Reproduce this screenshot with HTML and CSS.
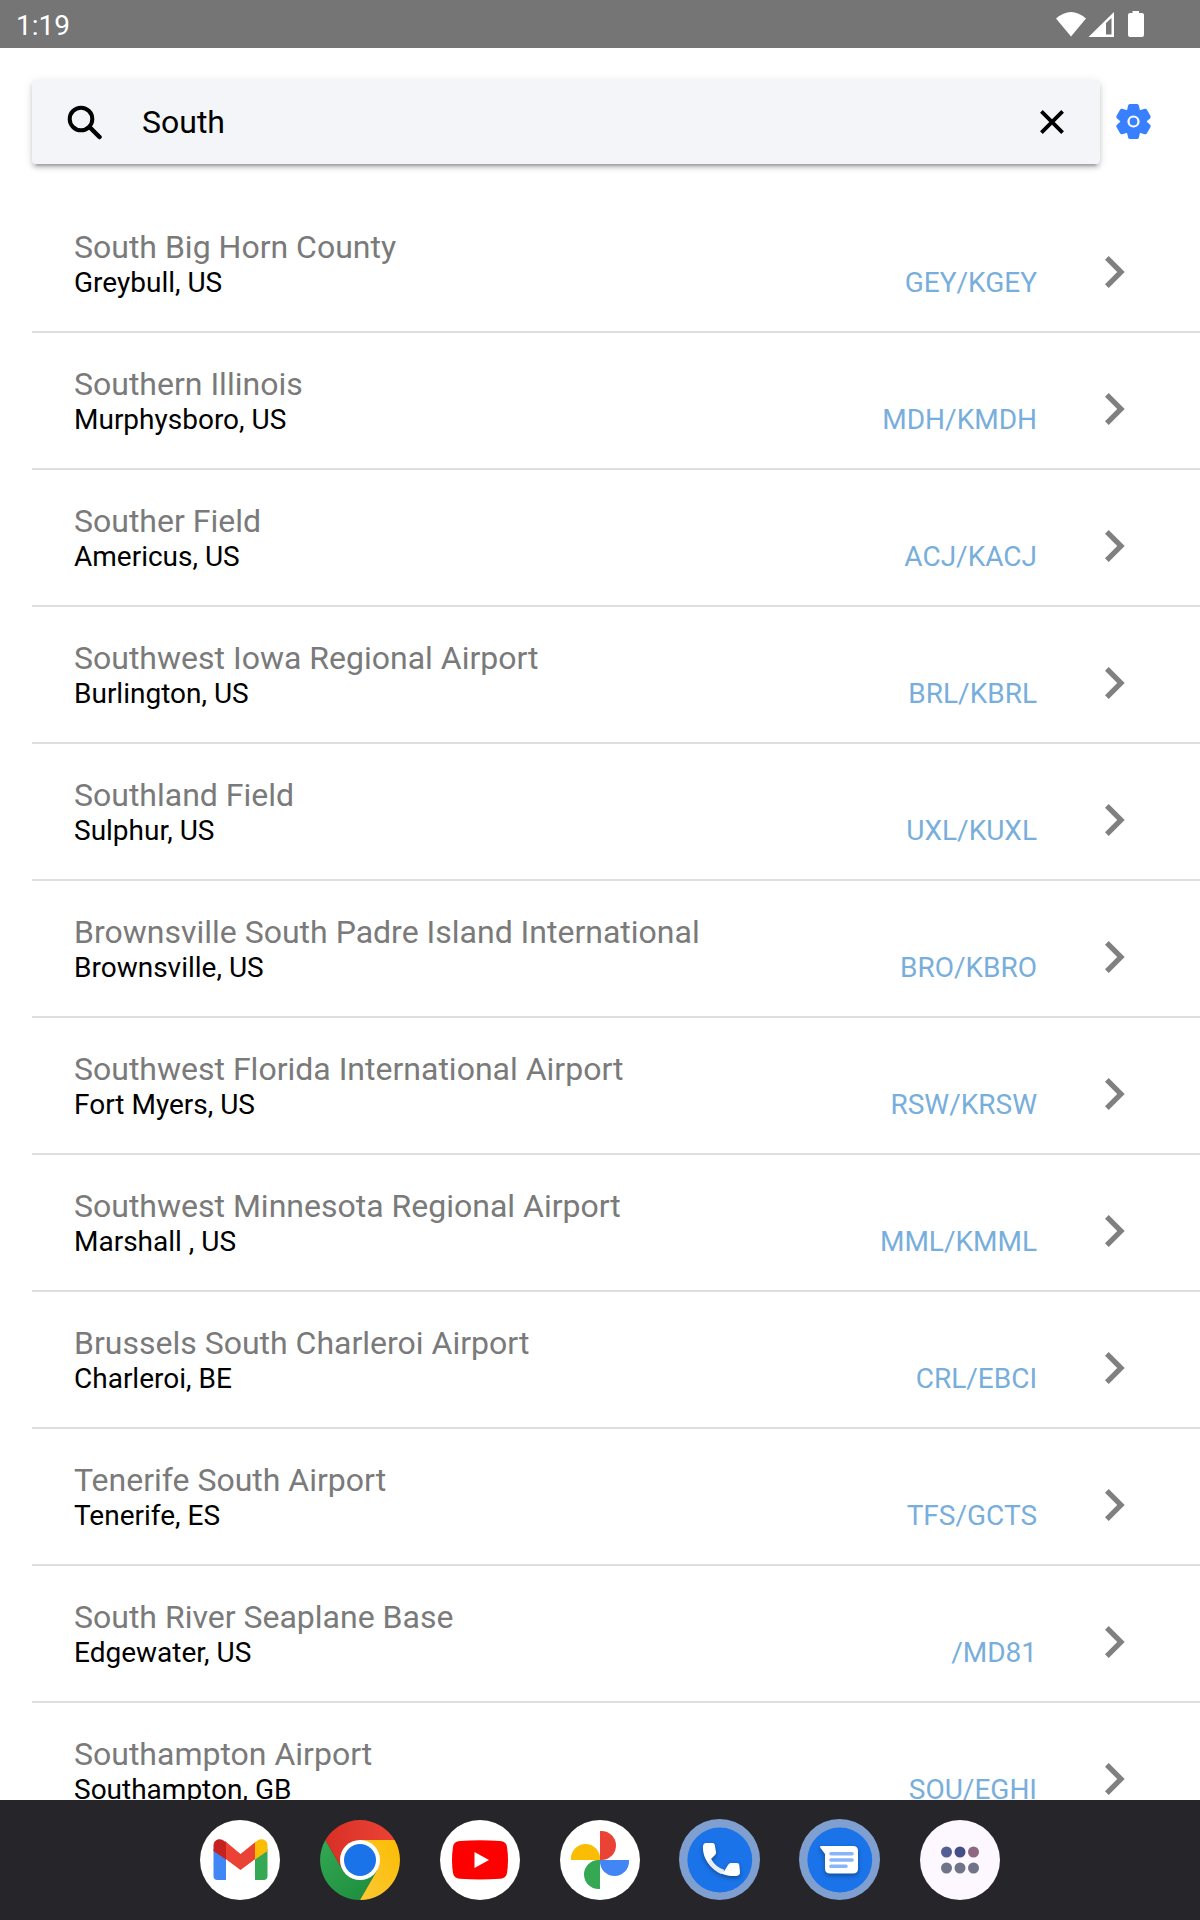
FILE: index.html
```
<!DOCTYPE html>
<html lang="en">
<head>
  <meta charset="UTF-8" />
  <meta name="viewport" content="width=device-width, initial-scale=1.0"/>
  <title>Airport Search</title>
  <link rel="stylesheet" href="styles.css">
</head>
<body>

  <!-- Device status bar -->
  <div class="status-bar">
    <span>1:19</span>
    <svg class="status-icons" width="90" height="28" viewBox="0 0 90 28" fill="#fff" aria-hidden="true">
      <path d="M1 7.500Q16 -5.500 31 7.500L16 25.500Z"/>
      <path fill-rule="evenodd" d="M33.500 26L59 1V26ZM51 12V23.500H56.500V7Z"/>
      <path d="M77.500 0h6.500v2h3q2 0 2 2v20q0 2-2 2h-12q-2 0-2-2v-20q0-2 2-2h2.500z"/>
    </svg>
  </div>

  <!-- Search box and settings -->
  <header class="toolbar">
    <form class="search-box" role="search">
      <svg width="36" height="36" viewBox="0 0 36 36" fill="none" stroke="#000" stroke-linecap="round" aria-hidden="true">
        <circle cx="14" cy="15" r="11.300" stroke-width="4"/>
        <path d="M23 23.500L32.500 33" stroke-width="4.500"/>
      </svg>
      <input type="text" id="search" aria-label="Search airports" value="South">
      <button type="reset" class="icon-btn" aria-label="Clear search">
        <svg width="24" height="24" viewBox="0 0 24 24" stroke="#000" stroke-width="3.800"><path d="M1.400 1.400L22.600 22.600M22.600 1.400L1.400 22.600"/></svg>
      </button>
    </form>
    <button type="button" class="icon-btn" aria-label="Settings">
      <svg width="36" height="36" viewBox="-17.5 -17.5 36 36" fill="#3880ff">
        <circle r="13"/>
        <g id="teeth">
          <path id="tooth" d="M-6.500-11L-5.400-16Q-5-17.500-3.700-17.500H3.700Q5-17.500 5.400-16L6.500-11L5 0H-5Z"/>
          <use href="#tooth" transform="rotate(60)"/>
          <use href="#tooth" transform="rotate(120)"/>
          <use href="#tooth" transform="rotate(180)"/>
          <use href="#tooth" transform="rotate(240)"/>
          <use href="#tooth" transform="rotate(300)"/>
        </g>
        <circle r="5" fill="none" stroke="#fff" stroke-width="2.200"/>
      </svg>
    </button>
  </header>

  <!-- Search results, filled by the script below -->
  <main class="results">
    <ul id="airportList"></ul>
  </main>

  <!-- App dock -->
  <nav class="dock" aria-label="Apps">
    <button type="button" aria-label="Gmail">
      <svg viewBox="0 0 80 80">
        <circle cx="40" cy="40" r="40" fill="#fff"/>
        <path fill="#4285f4" d="M13.500 29L26 38V60H17.500Q13.500 60 13.500 56Z"/>
        <path fill="#34a853" d="M67.500 29L55 38V60H63.500Q67.500 60 67.500 56Z"/>
        <path fill="#ea4335" d="M25 21L40.500 34L56 21.500V38.500L40.500 50L25 38.500Z"/>
        <path fill="#c5221f" d="M13.500 31V25.500C13.500 20 19 17.500 23.500 20.500L26 22.500V39.500Z"/>
        <path fill="#fbbc04" d="M67.500 31V25.500C67.500 20 62 17.500 57.500 20.500L55 22.500V39.500Z"/>
      </svg>
    </button>
    <button type="button" aria-label="Chrome">
      <svg viewBox="0 0 80 80">
        <defs>
          <linearGradient id="chromeRed"><stop offset="0" stop-color="#d93025"/><stop offset="1" stop-color="#ea4335"/></linearGradient>
          <linearGradient id="chromeGreen" x1="0" y1="0" x2=".8" y2="1"><stop offset="0" stop-color="#34a853"/><stop offset="1" stop-color="#1e8e3e"/></linearGradient>
          <linearGradient id="chromeYellow" x1="1" y1="0" x2="0" y2="1"><stop offset="0" stop-color="#fbbc04"/><stop offset="1" stop-color="#fcc934"/></linearGradient>
        </defs>
        <path fill="url(#chromeGreen)" d="M5.400 20A40 40 0 0 0 40 80L57.300 50L40 40L22.700 50Z"/>
        <path fill="url(#chromeYellow)" d="M74.600 20A40 40 0 0 1 40 80L57.300 50L40 20Z"/>
        <path fill="url(#chromeRed)" d="M5.400 20A40 40 0 0 1 74.600 20H40V40L22.700 50Z"/>
        <circle cx="40" cy="40" r="20" fill="#fff"/>
        <circle cx="40" cy="40" r="16" fill="#1a73e8"/>
      </svg>
    </button>
    <button type="button" aria-label="YouTube">
      <svg viewBox="0 0 80 80">
        <circle cx="40" cy="40" r="40" fill="#fff"/>
        <path fill="#f00" d="M20 21Q40 19.500 60 21Q66.500 21.500 67 27Q69 40 67 53Q66.500 58 60 58.800Q40 60.200 20 58.800Q13.500 58 13 53Q11 40 13 27Q13.500 21.500 20 21Z"/>
        <path fill="#fff" d="M34.500 32L49 40L34.500 48Z"/>
      </svg>
    </button>
    <button type="button" aria-label="Photos">
      <svg viewBox="0 0 80 80">
        <circle cx="40" cy="40" r="40" fill="#fff"/>
        <path fill="#ea4335" d="M40 40V11H41.500A14.500 14.500 0 0 1 41.500 40Z"/>
        <path fill="#4285f4" d="M40 40H69V41.500A14.500 14.500 0 0 1 40 41.500Z"/>
        <path fill="#34a853" d="M40 40V69H38.500A14.500 14.500 0 0 1 38.500 40Z"/>
        <path fill="#fbbc04" d="M40 40H11V38.500A14.500 14.500 0 0 1 40 38.500Z"/>
      </svg>
    </button>
    <button type="button" aria-label="Phone">
      <svg viewBox="0 0 80 80">
        <circle cx="39.500" cy="39.500" r="40.500" fill="#7e9fcf"/>
        <circle cx="39.800" cy="40" r="32.400" fill="#1a73e8"/>
        <path class="lifted" fill="#fff" d="M26 23H32.500Q34.500 23 34.800 25L36 32Q36.200 34 35 35L31 39Q35 47 44 51.500L48 45Q49 43 51 43H57Q59 43 59.300 45L60 52Q60.200 55.500 56.500 56C38 57.500 22 42 23 26.500Q23.200 23 26 23Z"/>
        <path fill="#e8eaf2" d="M31 39Q35.500 47 44.500 50L41 54Q32 49.500 27.500 42Z"/>
      </svg>
    </button>
    <button type="button" aria-label="Messages">
      <svg viewBox="0 0 80 80">
        <circle cx="39.500" cy="39.500" r="40.500" fill="#7e9fcf"/>
        <circle cx="39.800" cy="40" r="32.400" fill="#1a73e8"/>
        <path class="lifted" fill="#fff" d="M20.500 26H53Q58 26 58 31V48.500Q58 53.500 53 53.500H30Q25 53.500 25 48.500V34L20.500 28Q19.800 26.500 20.500 26Z"/>
        <path stroke="#8ab4f8" stroke-width="3.600" stroke-linecap="round" d="M31 33.700H52M31 40H52M31 46.300H46"/>
      </svg>
    </button>
    <button type="button" aria-label="All apps">
      <svg viewBox="0 0 80 80">
        <circle cx="40" cy="40" r="40" fill="#fdf8ff"/>
        <circle cx="26.500" cy="32" r="5.500" fill="#535e95"/>
        <circle cx="40" cy="32" r="5.500" fill="#454e87"/>
        <circle cx="53.500" cy="32" r="5.500" fill="#8f6780"/>
        <circle cx="26.500" cy="48" r="5.500" fill="#707488"/>
        <circle cx="40" cy="48" r="5.500" fill="#707488"/>
        <circle cx="53.500" cy="48" r="5.500" fill="#707488"/>
      </svg>
    </button>
  </nav>

  <script>
    const airports = [
      { name: "South Big Horn County", city: "Greybull, US", code: "GEY/KGEY" },
      { name: "Southern Illinois", city: "Murphysboro, US", code: "MDH/KMDH" },
      { name: "Souther Field", city: "Americus, US", code: "ACJ/KACJ" },
      { name: "Southwest Iowa Regional Airport", city: "Burlington, US", code: "BRL/KBRL" },
      { name: "Southland Field", city: "Sulphur, US", code: "UXL/KUXL" },
      { name: "Brownsville South Padre Island International", city: "Brownsville, US", code: "BRO/KBRO" },
      { name: "Southwest Florida International Airport", city: "Fort Myers, US", code: "RSW/KRSW" },
      { name: "Southwest Minnesota Regional Airport", city: "Marshall , US", code: "MML/KMML" },
      { name: "Brussels South Charleroi Airport", city: "Charleroi, BE", code: "CRL/EBCI" },
      { name: "Tenerife South Airport", city: "Tenerife, ES", code: "TFS/GCTS" },
      { name: "South River Seaplane Base", city: "Edgewater, US", code: "/MD81" },
      { name: "Southampton Airport", city: "Southampton, GB", code: "SOU/EGHI" }
    ];

    const airportList = document.getElementById("airportList");

    // Add one row per airport
    airports.forEach(airport => {
      const li = document.createElement("li");
      li.innerHTML = `
        <a class="airport" href="#">
          <span class="info">
            <span class="name">${airport.name}</span>
            <span class="city">${airport.city}</span>
          </span>
          <span class="code">${airport.code}</span>
          <svg class="chevron" width="20" height="32" viewBox="0 0 20 32" aria-hidden="true"><path d="M3.700 0L0 3.700L12.200 16L0 28.300L3.700 32L19.700 16Z"/></svg>
        </a>`;
      airportList.appendChild(li);
    });
  </script>

</body>
</html>
```
FILE: styles.css
```
* {
  box-sizing: border-box;
}

/* Page base styles */
body {
  margin: 0;
  height: 100vh;
  display: flex;
  flex-direction: column;
  font-family: Roboto, sans-serif;
  background: #fff;
  color: #000;
}

/* Status bar */
.status-bar {
  display: flex;
  justify-content: space-between;
  align-items: center;
  height: 48px;
  flex-shrink: 0;
  padding: 2px 55px 0 16px;
  background: #757575;
  color: #fff;
  font-size: 28px;
}

/* Toolbar with search and settings */
.toolbar {
  display: flex;
  align-items: center;
  gap: 16px;
  padding: 32px 48px 32px 32px;
}

.search-box {
  flex: 1;
  display: flex;
  align-items: center;
  height: 84px;
  padding: 0 36px 0 35px;
  border-radius: 4px;
  background: #f4f5f9;
  box-shadow: 0 6px 2px -4px rgba(0,0,0,0.2), 0 4px 4px 0 rgba(0,0,0,0.14), 0 2px 10px 0 rgba(0,0,0,0.12);
}

.search-box input {
  flex: 1;
  min-width: 0;
  padding: 0 39px;
  border: none;
  outline: none;
  background: transparent;
  font-family: inherit;
  font-size: 32px;
  color: #000;
}

.icon-btn {
  display: flex;
  padding: 0;
  border: none;
  background: none;
  cursor: pointer;
}

/* Result list */
.results {
  flex: 1;
  min-height: 0;
  overflow: hidden;
}

.results ul {
  margin: 0;
  padding: 0 0 0 32px;
  list-style: none;
}

.results li {
  border-bottom: 2px solid #dedede;
}

.airport {
  display: flex;
  align-items: flex-end;
  padding: 33px 75px 30px 42px;
  color: #000;
  text-decoration: none;
  font-size: 28px;
  line-height: 36px;
}

.info {
  flex: 1;
}

.name {
  display: block;
  font-size: 32px;
  color: #7a7a7a;
}

.city {
  display: block;
}

.code {
  color: #78aedb;
}

.chevron {
  margin: 0 0 13px 68px;
  fill: #808080;
}

/* App dock */
.dock {
  display: flex;
  justify-content: center;
  align-items: center;
  gap: 40px;
  height: 120px;
  flex-shrink: 0;
  background: #26262a;
}

.dock button {
  width: 80px;
  height: 80px;
  padding: 0;
  border: none;
  background: none;
  cursor: pointer;
}

.dock svg {
  display: block;
  overflow: visible;
}

.lifted {
  filter: drop-shadow(0 2px 2px rgba(0,0,0,0.35));
}
```
